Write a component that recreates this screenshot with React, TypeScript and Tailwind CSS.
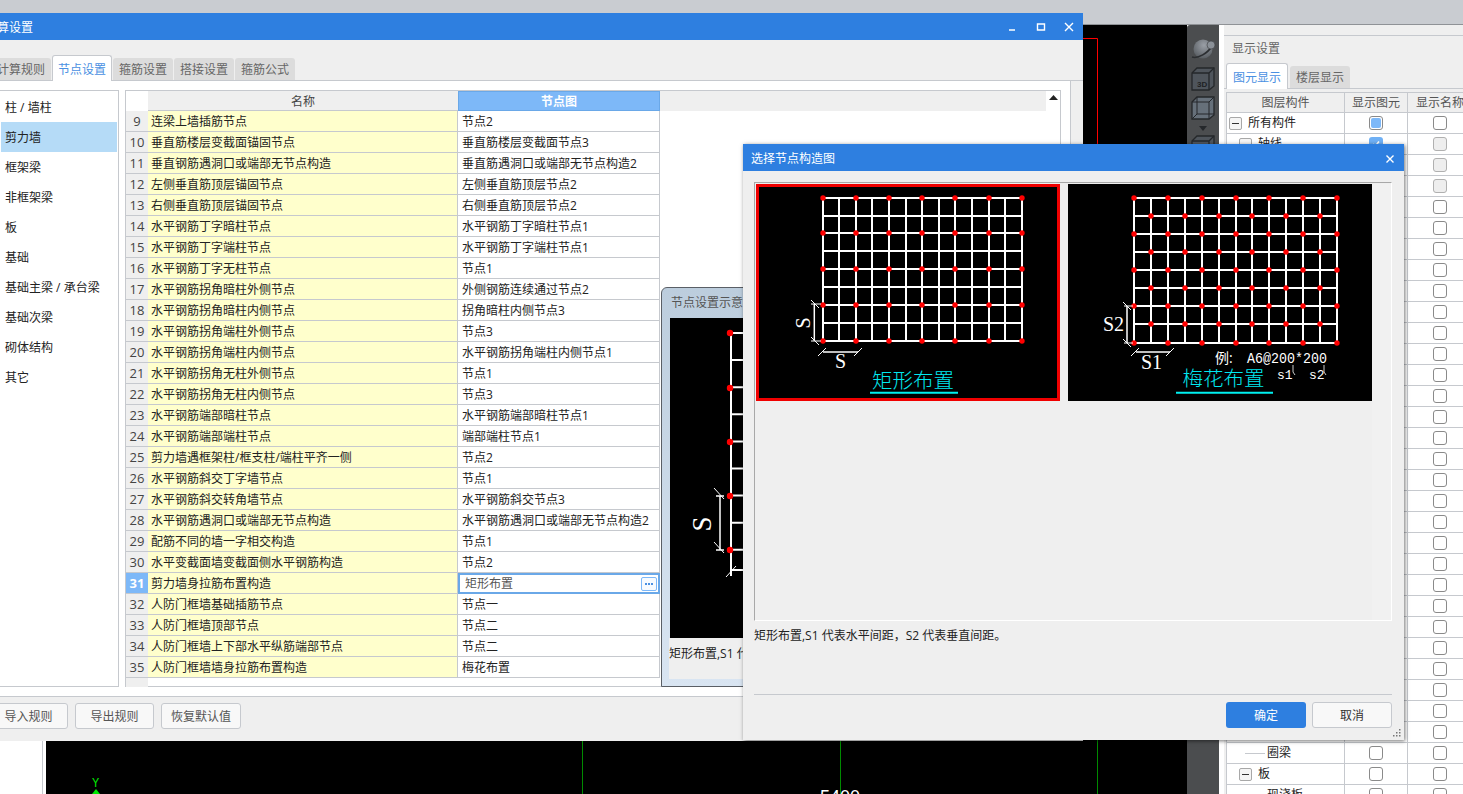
const rows: [number, string, string][] = [
  [9, "连梁上墙插筋节点", "节点2"],
  [10, "垂直筋楼层变截面锚固节点", "垂直筋楼层变截面节点3"],
  [11, "垂直钢筋遇洞口或端部无节点构造", "垂直筋遇洞口或端部无节点构造2"],
  [12, "左侧垂直筋顶层锚固节点", "左侧垂直筋顶层节点2"],
  [13, "右侧垂直筋顶层锚固节点", "右侧垂直筋顶层节点2"],
  [14, "水平钢筋丁字暗柱节点", "水平钢筋丁字暗柱节点1"],
  [15, "水平钢筋丁字端柱节点", "水平钢筋丁字端柱节点1"],
  [16, "水平钢筋丁字无柱节点", "节点1"],
  [17, "水平钢筋拐角暗柱外侧节点", "外侧钢筋连续通过节点2"],
  [18, "水平钢筋拐角暗柱内侧节点", "拐角暗柱内侧节点3"],
  [19, "水平钢筋拐角端柱外侧节点", "节点3"],
  [20, "水平钢筋拐角端柱内侧节点", "水平钢筋拐角端柱内侧节点1"],
  [21, "水平钢筋拐角无柱外侧节点", "节点1"],
  [22, "水平钢筋拐角无柱内侧节点", "节点3"],
  [23, "水平钢筋端部暗柱节点", "水平钢筋端部暗柱节点1"],
  [24, "水平钢筋端部端柱节点", "端部端柱节点1"],
  [25, "剪力墙遇框架柱/框支柱/端柱平齐一侧", "节点2"],
  [26, "水平钢筋斜交丁字墙节点", "节点1"],
  [27, "水平钢筋斜交转角墙节点", "水平钢筋斜交节点3"],
  [28, "水平钢筋遇洞口或端部无节点构造", "水平钢筋遇洞口或端部无节点构造2"],
  [29, "配筋不同的墙一字相交构造", "节点1"],
  [30, "水平变截面墙变截面侧水平钢筋构造", "节点2"],
  [31, "剪力墙身拉筋布置构造", "矩形布置"],
  [32, "人防门框墙基础插筋节点", "节点一"],
  [33, "人防门框墙顶部节点", "节点二"],
  [34, "人防门框墙上下部水平纵筋端部节点", "节点二"],
  [35, "人防门框墙墙身拉筋布置构造", "梅花布置"],
];

const sideItems = ["柱 / 墙柱", "剪力墙", "框架梁", "非框架梁", "板", "基础", "基础主梁 / 承台梁", "基础次梁", "砌体结构", "其它"];

const serif = "'Liberation Serif', serif";

function Check({ kind }: { kind: "off" | "gray" | "dot" | "on" }) {
  if (kind === "on")
    return (
      <span className="flex h-[14px] w-[14px] items-center justify-center rounded-[3px] bg-[#6fb0f5]">
        <svg width="10" height="10" viewBox="0 0 10 10">
          <path d="M2 5l2 2.5L8 2.5" fill="none" stroke="white" strokeWidth="1.6" />
        </svg>
      </span>
    );
  return (
    <span
      className={
        kind === "dot"
          ? "flex h-[14px] w-[14px] items-center justify-center rounded-[3px] border border-[#8a8a8a] bg-white"
          : kind === "gray"
            ? "block h-[14px] w-[14px] rounded-[3px] border border-[#b0b0b0] bg-[#eeeeee]"
            : "block h-[14px] w-[14px] rounded-[3px] border border-[#8a8a8a] bg-white"
      }
    >
      {kind === "dot" && <span className="block h-[10px] w-[10px] rounded-[2px] bg-[#7db8f8]" />}
    </span>
  );
}

function Expander() {
  return (
    <span className="flex h-[13px] w-[13px] shrink-0 items-center justify-center rounded-[2px] border border-[#a8a8a8] bg-[#f5f5f5]">
      <span className="block h-px w-[7px] bg-[#333]" />
    </span>
  );
}

// rebar grid drawn inside the node pictures
function RebarGrid({ x0, y0, dx, dy, stagger }: { x0: number; y0: number; dx: number; dy: number; stagger: boolean }) {
  const xs = Array.from({ length: 13 }, (_, i) => Math.round(x0 + i * dx));
  const ys = Array.from({ length: 9 }, (_, i) => Math.round(y0 + i * dy));
  const dots: [number, number][] = [];
  xs.forEach((x, i) =>
    ys.forEach((y, j) => {
      if ((i % 2 === 0 && j % 2 === 0) || (stagger && i % 2 === 1 && j % 2 === 1)) dots.push([x, y]);
    })
  );
  return (
    <g>
      {xs.map((x) => (
        <line key={x} x1={x} x2={x} y1={y0} y2={ys[8] + 1} stroke="white" strokeWidth="2" />
      ))}
      {ys.map((y) => (
        <line key={y} x1={x0} x2={xs[12] + 1} y1={y} y2={y} stroke="white" strokeWidth="2" />
      ))}
      {dots.map(([x, y]) => (
        <circle key={`${x}-${y}`} cx={x} cy={y} r="2.7" fill="#ff0000" />
      ))}
    </g>
  );
}

function DimTick({ x, y }: { x: number; y: number }) {
  return <line x1={x - 4} y1={y - 4} x2={x + 4} y2={y + 4} stroke="white" strokeWidth="1" />;
}

function RectPicture() {
  return (
    <div className="h-[217px] w-[304px] shrink-0 border-[3px] border-[#f00000] bg-black">
      <svg width="298" height="211" viewBox="3 3 298 211" className="block">
        <RebarGrid x0={66.5} y0={13.7} dx={16.6} dy={17.875} stagger={false} />
        <line x1="58.3" x2="58.3" y1="120" y2="157" stroke="white" strokeWidth="1.5" />
        <line x1="55" x2="65" y1="120" y2="120" stroke="white" strokeWidth="1" />
        <line x1="55" x2="65" y1="157" y2="157" stroke="white" strokeWidth="1" />
        <DimTick x={59} y={120} />
        <DimTick x={59} y={157} />
        <line x1="67" x2="102" y1="168" y2="168" stroke="white" strokeWidth="1.5" />
        <line x1="62" y1="172" x2="70" y2="164" stroke="white" strokeWidth="1" />
        <line x1="98" y1="172" x2="106" y2="164" stroke="white" strokeWidth="1" />
        <text x="47" y="139" fill="white" fontSize="20" fontFamily={serif} textAnchor="middle" dominantBaseline="central" transform="rotate(-90 47 139)">
          S
        </text>
        <text x="79" y="184" fill="white" fontSize="20" fontFamily={serif}>
          S
        </text>
        <text x="116" y="204" fill="#00e8f0" fontSize="20.5" fontWeight="300">
          矩形布置
        </text>
        <line x1="114" x2="202" y1="208.7" y2="208.7" stroke="#00f0f0" strokeWidth="2" />
      </svg>
    </div>
  );
}

function PlumPicture() {
  return (
    <div className="h-[217px] w-[304px] shrink-0 bg-black">
      <svg width="304" height="217" viewBox="0 0 304 217" className="block">
        <RebarGrid x0={66.3} y0={13.7} dx={16.87} dy={18.1} stagger />
        <line x1="59" x2="59" y1="122" y2="159" stroke="white" strokeWidth="1.5" />
        <line x1="56" x2="65" y1="122" y2="122" stroke="white" strokeWidth="1" />
        <line x1="56" x2="65" y1="159" y2="159" stroke="white" strokeWidth="1" />
        <DimTick x={59} y={122} />
        <DimTick x={59} y={159} />
        <line x1="68" x2="102" y1="168" y2="168" stroke="white" strokeWidth="1.5" />
        <line x1="63" y1="172" x2="71" y2="164" stroke="white" strokeWidth="1" />
        <line x1="98" y1="172" x2="106" y2="164" stroke="white" strokeWidth="1" />
        <text x="35" y="147" fill="white" fontSize="20" fontFamily={serif}>
          S2
        </text>
        <text x="73" y="185" fill="white" fontSize="20" fontFamily={serif}>
          S1
        </text>
        <text x="147" y="179" fill="white" fontSize="14">
          例:
        </text>
        <text x="179" y="179" fill="white" fontSize="15" fontFamily="'Liberation Mono', monospace" textLength="80" lengthAdjust="spacingAndGlyphs">
          A6@200*200
        </text>
        <path d="M225 181v7l2 3M256 181v7l2 3" fill="none" stroke="white" strokeWidth="0.8" />
        <text x="209" y="195" fill="white" fontSize="13" fontFamily="'Liberation Mono', monospace">
          s1
        </text>
        <text x="241" y="195" fill="white" fontSize="13" fontFamily="'Liberation Mono', monospace">
          s2
        </text>
        <text x="114.5" y="202" fill="#00e8f0" fontSize="20.5" fontWeight="300">
          梅花布置
        </text>
        <line x1="108" x2="205" y1="208.7" y2="208.7" stroke="#00f0f0" strokeWidth="2" />
      </svg>
    </div>
  );
}

function SidePreview() {
  const ticks = Array.from({ length: 9 }, (_, i) => 15 + i * 27.1);
  const dots = [15, 70, 124, 178, 232];
  return (
    <svg width="290" height="320" viewBox="0 0 290 320" className="block bg-black">
      <line x1="61" x2="61" y1="15" y2="258" stroke="white" strokeWidth="2" />
      {ticks.map((y) => (
        <line key={y} x1="61" x2="290" y1={y} y2={y} stroke="white" strokeWidth="2" />
      ))}
      <line x1="61" x2="290" y1="252" y2="252" stroke="white" strokeWidth="2" />
      {dots.map((y) => (
        <circle key={y} cx="60" cy={y} r="3.2" fill="#ff0000" />
      ))}
      <line x1="50" x2="50" y1="178" y2="232" stroke="white" strokeWidth="1.5" />
      <line x1="46" x2="54" y1="178" y2="178" stroke="white" strokeWidth="1.5" />
      <line x1="46" x2="54" y1="232" y2="232" stroke="white" strokeWidth="1.5" />
      <line x1="44" y1="170" x2="54" y2="181" stroke="white" strokeWidth="1" />
      <line x1="44" y1="224" x2="54" y2="235" stroke="white" strokeWidth="1" />
      <line x1="56" y1="259" x2="66" y2="248" stroke="white" strokeWidth="1" />
      <text x="32" y="206" fill="white" fontSize="27" fontFamily={serif} textAnchor="middle" dominantBaseline="central" transform="rotate(-90 32 206)">
        S
      </text>
    </svg>
  );
}

function Toolbar() {
  return (
    <div className="flex h-full w-[32px] shrink-0 flex-col items-center gap-[3px] rounded-tl-[3px] bg-[#4b4d4f] pt-[9px]">
      <svg width="26" height="26" viewBox="0 0 26 26">
        <defs>
          <radialGradient id="planet" cx="0.55" cy="0.3" r="0.8">
            <stop offset="0" stopColor="#9a9fa6" />
            <stop offset="1" stopColor="#50555a" />
          </radialGradient>
        </defs>
        <circle cx="13" cy="15" r="9.5" fill="url(#planet)" />
        <path d="M2 23c6 2 16-4 20-11" fill="none" stroke="#2b2e31" strokeWidth="1.6" />
        <circle cx="21" cy="11" r="4" fill="#8a9097" stroke="#3a3d40" strokeWidth="0.6" />
      </svg>
      <svg width="26" height="26" viewBox="0 0 26 26" className="mt-[3px]">
        <path d="M2 7l5-5h17v18l-5 4H2z" fill="#4f555c" stroke="#24272a" strokeWidth="1.3" />
        <path d="M2 7h17v17M19 7l5-5" fill="none" stroke="#24272a" strokeWidth="1.3" />
        <text x="7" y="21" fontSize="8" fill="#1e2124" fontFamily="'Liberation Sans', sans-serif" fontWeight="700">
          3D
        </text>
      </svg>
      <svg width="26" height="26" viewBox="0 0 26 26">
        <path d="M2 7l5-5h17v18l-5 4H2z" fill="#66707a" stroke="#24272a" strokeWidth="1.3" />
        <path d="M2 7h17v17M19 7l5-5M7 2v17h17M2 24l5-5" fill="none" stroke="#24272a" strokeWidth="1" />
      </svg>
      <svg width="8" height="5" viewBox="0 0 8 5" className="mt-[2px]">
        <path d="M0 0h8L4 5z" fill="#25282b" />
      </svg>
      <svg width="26" height="26" viewBox="0 0 26 26">
        <path d="M2 7l5-5h17v18l-5 4H2z" fill="#4f555c" stroke="#24272a" strokeWidth="1.3" />
        <path d="M2 7h17v17M19 7l5-5" fill="none" stroke="#24272a" strokeWidth="1.3" />
      </svg>
    </div>
  );
}

function DisplayPanel() {
  const panelRows = Array.from({ length: 33 }, (_, i) => i);
  return (
    <div className="flex h-full w-[239px] shrink-0 flex-col overflow-hidden bg-[#efefef] text-[12px]">
      <div className="h-[11px] shrink-0 border-b border-[#c6c9ce]" />
      <div className="flex h-[26px] shrink-0 items-center pl-[8px] text-[#666]">显示设置</div>
      <div className="flex h-[27px] shrink-0 items-end gap-[2px] border-b border-[#c6c9ce] pl-[2px]">
        <div className="-mb-px flex h-[26px] w-[62px] items-center justify-center rounded-t-[3px] border border-b-0 border-[#c6c9ce] bg-white pt-[2px] text-[#4a90e2]">图元显示</div>
        <div className="flex h-[22px] w-[60px] items-center justify-center rounded-t-[3px] bg-[#dcdcdc] pt-[2px] text-[#666]">楼层显示</div>
      </div>
      <div className="mt-[3px] ml-[2px] w-[260px] flex-1 border-t border-l border-[#c6c9ce] bg-white text-[#222]">
        <div className="flex h-[20px] bg-[#efefef] text-[#555]">
          <div className="flex w-[118px] shrink-0 items-center justify-center border-r border-b border-[#c6c9ce]">图层构件</div>
          <div className="flex w-[63px] shrink-0 items-center justify-center border-r border-b border-[#c6c9ce]">显示图元</div>
          <div className="flex w-[64px] shrink-0 items-center justify-center border-b border-[#c6c9ce]">显示名称</div>
        </div>
        {panelRows.map((i) => (
          <div key={i} className="flex h-[21px] border-b border-[#c6c9ce]">
            <div className="flex w-[118px] shrink-0 items-center overflow-hidden whitespace-nowrap border-r border-[#c6c9ce]">
              {i === 0 && (
                <span className="flex items-center gap-[6px] pl-[2px]">
                  <Expander />
                  所有构件
                </span>
              )}
              {i === 1 && (
                <span className="flex items-center gap-[6px] pl-[12px]">
                  <Expander />
                  轴线
                </span>
              )}
              {i === 30 && (
                <span className="flex items-center gap-[2px] pl-[18px]">
                  <span className="block h-px w-[20px] bg-[#c6c9ce]" />
                  圈梁
                </span>
              )}
              {i === 31 && (
                <span className="flex items-center gap-[6px] pl-[12px]">
                  <Expander />板
                </span>
              )}
              {i === 32 && (
                <span className="flex items-center gap-[2px] pl-[18px]">
                  <span className="block h-px w-[20px] bg-[#c6c9ce]" />
                  现浇板
                </span>
              )}
            </div>
            <div className="flex w-[63px] shrink-0 items-center justify-center border-r border-[#c6c9ce]">
              <Check kind={i === 0 ? "dot" : i === 1 ? "on" : "off"} />
            </div>
            <div className="flex w-[64px] shrink-0 items-center justify-center">
              <Check kind={i >= 1 && i <= 3 ? "gray" : "off"} />
            </div>
          </div>
        ))}
      </div>
    </div>
  );
}

function MainDialog() {
  return (
    <div className="absolute -left-5 top-[13px] flex h-[728px] w-[1103px] flex-col bg-[#efefef] text-[12px] text-[#222]">
      <div className="flex h-[27px] shrink-0 items-center bg-[#2e7fe0] pl-[5px] text-white">
        <span className="flex-1 pt-[2px]">计算设置</span>
        <div className="flex items-center gap-[16px] pr-[8px]">
          <svg width="12" height="12" viewBox="0 0 12 12">
            <path d="M2 9h6" stroke="white" strokeWidth="1.5" />
          </svg>
          <svg width="12" height="12" viewBox="0 0 12 12">
            <path d="M2.5 3h7v6h-7z" fill="none" stroke="white" strokeWidth="1.4" />
          </svg>
          <svg width="12" height="12" viewBox="0 0 12 12">
            <path d="M2 2l8 8M10 2l-8 8" stroke="white" strokeWidth="1.4" />
          </svg>
        </div>
      </div>
      <div className="mt-[15px] flex h-[26px] shrink-0 items-end gap-[1px] border-b border-[#c6c9ce] pl-[11px]">
        <div className="flex h-[22px] w-[60px] items-center justify-center rounded-t-[3px] bg-[#dcdcdc] pt-[2px] text-[#666]">计算规则</div>
        <div className="-mb-px flex h-[26px] w-[60px] items-center justify-center rounded-t-[3px] border border-b-0 border-[#c6c9ce] bg-white pt-[2px] text-[#4a90e2]">节点设置</div>
        <div className="flex h-[22px] w-[60px] items-center justify-center rounded-t-[3px] bg-[#dcdcdc] pt-[2px] text-[#666]">箍筋设置</div>
        <div className="flex h-[22px] w-[60px] items-center justify-center rounded-t-[3px] bg-[#dcdcdc] pt-[2px] text-[#666]">搭接设置</div>
        <div className="flex h-[22px] w-[60px] items-center justify-center rounded-t-[3px] bg-[#dcdcdc] pt-[2px] text-[#666]">箍筋公式</div>
      </div>
      <div className="flex h-[616px] w-[1091px] shrink-0 gap-[6px] border-r border-b border-[#c6c9ce] bg-white pt-[9px] pl-[20px]">
        <div className="h-[597px] w-[119px] shrink-0 border-t border-r border-b border-[#c6c9ce] pt-[1px]">
          {sideItems.map((item, i) => (
            <div
              key={item}
              className={
                i === 1
                  ? "ml-px flex h-[30px] w-[116px] items-center bg-[#b5dbf7] pt-[2px] pl-[4px] whitespace-nowrap"
                  : "ml-px flex h-[30px] w-[116px] items-center pt-[2px] pl-[4px] whitespace-nowrap"
              }
            >
              {item}
            </div>
          ))}
        </div>
        <div className="flex h-[597px] w-[936px] shrink-0 border border-[#c6c9ce]">
          <div className="w-[920px] shrink-0">
            <div className="flex h-[20px] bg-[#efefef] text-[#444]">
              <div className="w-[22px] shrink-0 bg-white" />
              <div className="flex w-[310px] shrink-0 items-center justify-center border-b border-[#c6c9ce] pt-[2px]">名称</div>
              <div className="flex w-[202px] shrink-0 items-center justify-center border border-[#6aa8e8] bg-[#7db8f8] pt-[2px] font-semibold text-white">节点图</div>
              <div className="flex-1" />
            </div>
            {rows.map(([no, name, node]) => (
              <div key={no} className="flex h-[21px]">
                <div
                  className={
                    no === 31
                      ? "flex w-[22px] shrink-0 items-center justify-center border-b border-[#c6c9ce] bg-[#7db8f8] pt-[2px] text-[13px] font-bold text-white"
                      : "flex w-[22px] shrink-0 items-center justify-center border-b border-[#c6c9ce] bg-[#efefef] pt-[2px] text-[13px] text-[#444]"
                  }
                >
                  {no}
                </div>
                <div className="flex w-[310px] shrink-0 items-center border-r border-b border-[#c6c9ce] bg-[#ffffcc] pt-[2px] pl-[3px] whitespace-nowrap">{name}</div>
                {no === 31 ? (
                  <div className="flex w-[202px] shrink-0 items-center justify-between border-2 border-[#6aa8e8] pr-[1px] pl-[5px] text-[#555]">
                    矩形布置
                    <span className="flex h-[14px] w-[16px] items-center justify-center gap-[1px] rounded-[2px] border border-[#7db8f8] bg-[#f7fbff]">
                      <span className="block h-[2px] w-[2px] bg-[#4a90e2]" />
                      <span className="block h-[2px] w-[2px] bg-[#4a90e2]" />
                      <span className="block h-[2px] w-[2px] bg-[#4a90e2]" />
                    </span>
                  </div>
                ) : (
                  <div className="flex w-[202px] shrink-0 items-center border-r border-b border-[#c6c9ce] pt-[2px] pl-[4px] whitespace-nowrap">{node}</div>
                )}
              </div>
            ))}
            <div className="h-[9px] w-[22px] bg-[#efefef]" />
          </div>
          <div className="flex w-[14px] shrink-0 justify-center pt-[4px]">
            <svg width="9" height="5" viewBox="0 0 9 5">
              <path d="M0 5h9L4.5 0z" fill="#222" />
            </svg>
          </div>
        </div>
      </div>
      <div className="flex flex-1 items-start gap-[7px] pt-[6px] pl-[9px] text-[#555]">
        <button className="flex h-[26px] w-[79px] items-center justify-center rounded-[3px] border border-[#c6c9ce] bg-[#f8f8f8] pt-[2px]">导入规则</button>
        <button className="flex h-[26px] w-[79px] items-center justify-center rounded-[3px] border border-[#c6c9ce] bg-[#f8f8f8] pt-[2px]">导出规则</button>
        <button className="flex h-[26px] w-[80px] items-center justify-center rounded-[3px] border border-[#c6c9ce] bg-[#f8f8f8] pt-[2px]">恢复默认值</button>
      </div>
    </div>
  );
}

function PreviewWindow() {
  return (
    <div className="absolute top-[287px] left-[661px] flex h-[400px] w-[300px] flex-col rounded-tl-[6px] border border-[#5a5f66] bg-gradient-to-b from-[#bccddd] to-[#d9e5f2] px-[8px] text-[12px] text-[#222]">
      <div className="flex h-[30px] shrink-0 items-center pl-px whitespace-nowrap text-[#555]">节点设置示意图</div>
      <SidePreview />
      <div className="h-[41px] w-[290px] -ml-px bg-[#efefef] pt-[7px] whitespace-nowrap">矩形布置,S1 代表水平间距，S2 代表垂直间距。</div>
    </div>
  );
}

function SelectDialog() {
  return (
    <div className="absolute top-[144px] left-[743px] flex h-[596px] w-[661px] flex-col bg-[#efefef] text-[12px] text-[#222] shadow-[1px_1px_4px_rgba(0,0,0,0.55)]">
      <div className="flex h-[27px] shrink-0 items-center justify-between bg-[#2e7fe0] pt-[2px] pr-[8px] pl-[8px] text-white">
        选择节点构造图
        <svg width="12" height="12" viewBox="0 0 12 12">
          <path d="M2.5 2.5l7 7M9.5 2.5l-7 7" stroke="white" strokeWidth="1.4" />
        </svg>
      </div>
      <div className="flex-1 px-[11px] pt-[11px]">
        <div className="flex h-[439px] w-[638px] border-t border-r border-b border-l border-t-[#a8a8a8] border-r-white border-b-white border-l-[#a8a8a8] pt-[1px] pl-[1px]">
          <RectPicture />
          <div className="ml-[8px]">
            <PlumPicture />
          </div>
          <div className="ml-auto h-full w-[19px] bg-[#f1f1f1]" />
        </div>
        <div className="flex h-[29px] items-center">矩形布置,S1 代表水平间距，S2 代表垂直间距。</div>
        <div className="mt-[44px] h-px w-[638px] bg-[#c6c9ce]" />
        <div className="mt-[7px] flex w-[638px] justify-end gap-[6px] text-[#333]">
          <button className="flex h-[26px] w-[80px] items-center justify-center rounded-[3px] bg-[#2e7fe0] pt-[2px] text-white">确定</button>
          <button className="flex h-[26px] w-[80px] items-center justify-center rounded-[3px] border border-[#c6c9ce] bg-[#f8f8f8] pt-[2px]">取消</button>
        </div>
      </div>
      <svg width="9" height="9" viewBox="0 0 9 9" className="absolute right-[3px] bottom-[3px]">
        <path d="M7 1h1.5v1.5H7zM4 4h1.5v1.5H4zM7 4h1.5v1.5H7zM1 7h1.5v1.5H1zM4 7h1.5v1.5H4zM7 7h1.5v1.5H7z" fill="#777" />
      </svg>
    </div>
  );
}

export default function App() {
  return (
    <div className="relative h-[794px] w-[1463px] overflow-hidden bg-white [font-family:'Open_Sans','Noto_Sans_CJK_SC',sans-serif]">
      <div className="h-[25px] border-b border-[#8f9296] bg-[#c9ccd1]" />
      <div className="flex h-[769px]">
        <div className="h-full w-[46px] shrink-0 bg-white">
          <div className="ml-[42px] h-full w-px bg-[#c6c9ce]" />
        </div>
        <div className="relative min-w-0 flex-1 bg-black">
          {/* cad canvas, coordinates follow the drawing */}
          <svg width="1141" height="769" viewBox="0 0 1141 769" className="block">
            <path d="M1037 13.5h14.5v120" fill="none" stroke="#ff0000" strokeWidth="1" />
            <line x1="536.5" x2="536.5" y1="700" y2="769" stroke="#008a00" />
            <line x1="794.5" x2="794.5" y1="700" y2="769" stroke="#008a00" />
            <line x1="1051.5" x2="1051.5" y1="700" y2="769" stroke="#008a00" />
            <text x="46" y="762" fill="#00e800" fontSize="12" fontFamily="'Liberation Mono', monospace">
              Y
            </text>
            <path d="M50 764l-4 5h8z" fill="#00e800" />
            <text x="774" y="778" fill="white" fontSize="18" fontFamily="'Liberation Sans', sans-serif">
              5400
            </text>
          </svg>
        </div>
        <Toolbar />
        <div className="h-full w-[5px] shrink-0 bg-white" />
        <DisplayPanel />
      </div>
      <MainDialog />
      <PreviewWindow />
      <SelectDialog />
    </div>
  );
}
